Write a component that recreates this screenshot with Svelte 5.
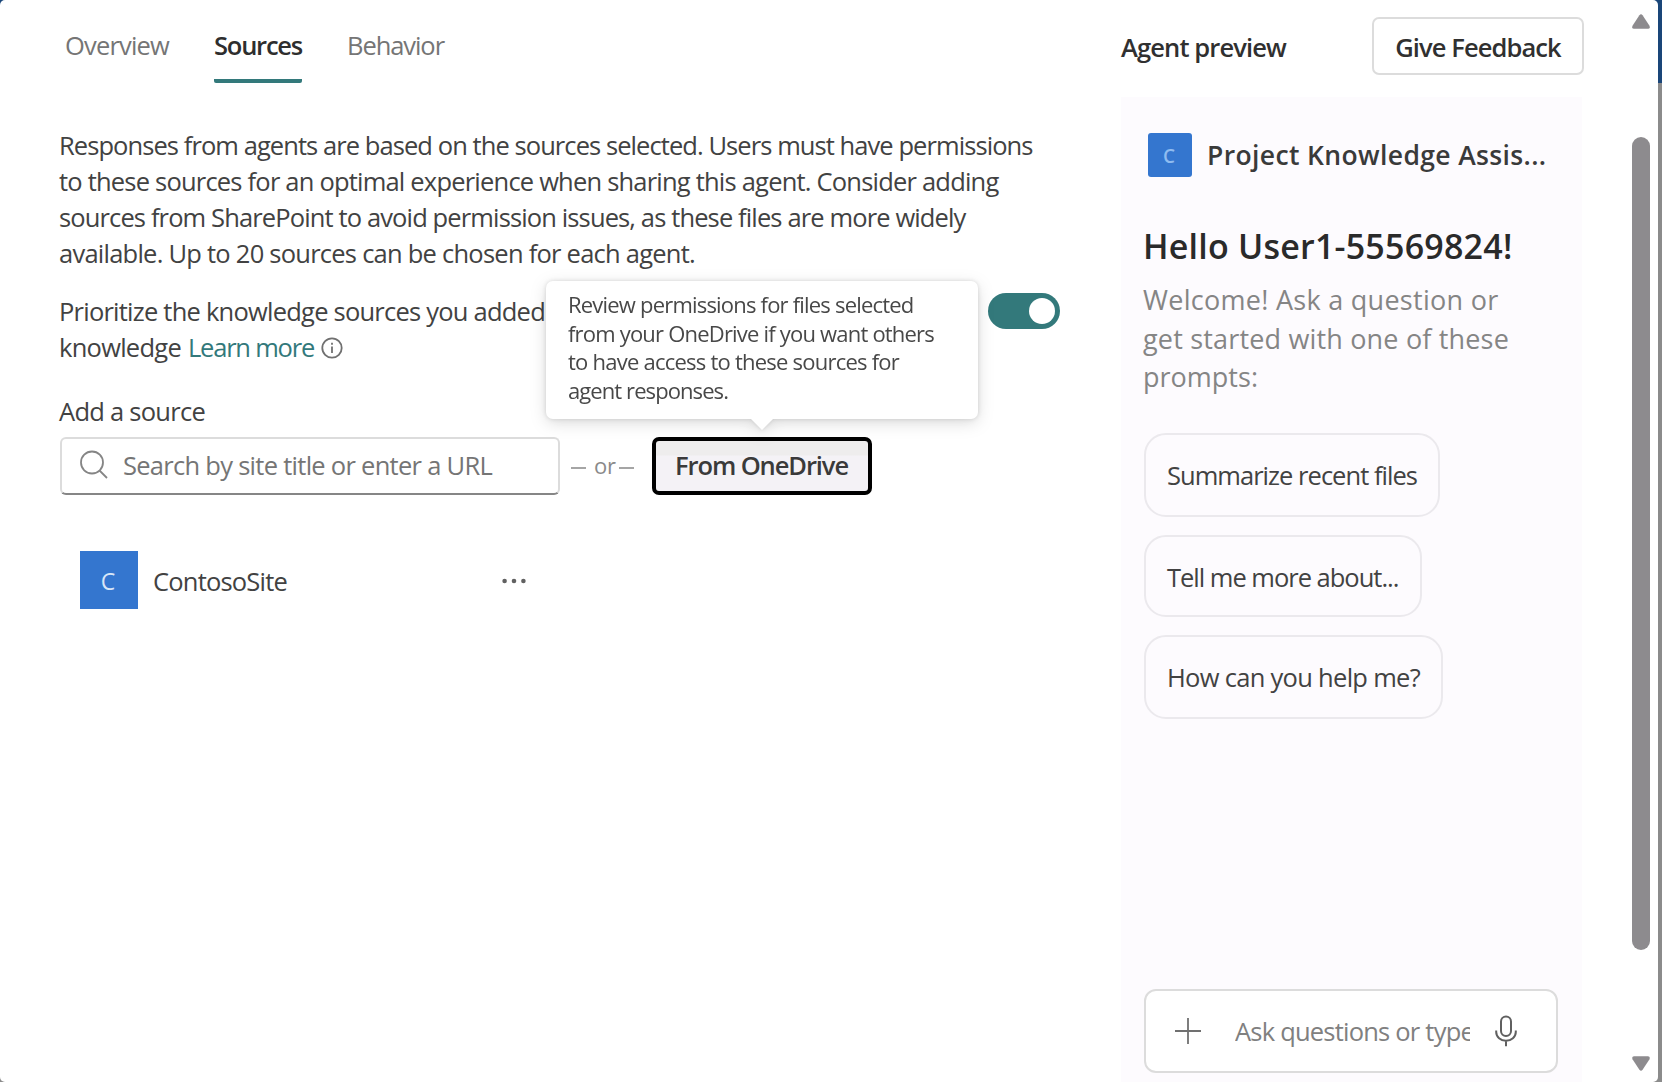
<script>
  // Tracks a line of text so that it spans the given width.
  function fit(node, width) {
    const natural = node.getBoundingClientRect().width;
    node.style.letterSpacing = `${(width - natural) / node.textContent.length}px`;
  }

  const tabs = [
    ['Overview', 104],
    ['Sources', 88],
    ['Behavior', 97]
  ];
  const intro = [
    ['Responses from agents are based on the sources selected. Users must have permissions', 973.5],
    ['to these sources for an optimal experience when sharing this agent. Consider adding', 939.5],
    ['sources from SharePoint to avoid permission issues, as these files are more widely', 906.5],
    ['available. Up to 20 sources can be chosen for each agent.', 636]
  ];
  const tip = [
    ['Review permissions for files selected', 345.5],
    ['from your OneDrive if you want others', 366],
    ['to have access to these sources for', 331],
    ['agent responses.', 160]
  ];
  const welcome = [
    ['Welcome! Ask a question or', 355.5],
    ['get started with one of these', 366],
    ['prompts:', 115]
  ];
  const prompts = [
    ['Summarize recent files', 250],
    ['Tell me more about...', 231.5],
    ['How can you help me?', 253]
  ];
</script>

<div class="dialog">
  <main class="editor">
    <nav class="tabs">
      {#each tabs as [text, width]}
        <div class="tab" class:active={text === 'Sources'}><span class="line" use:fit={width}>{text}</span></div>
      {/each}
    </nav>

    <p class="intro">
      {#each intro as [text, width]}<span class="line" use:fit={width}>{text}</span>{/each}
    </p>

    <div class="priority">
      <p>
        <span class="line" use:fit={486}>Prioritize the knowledge sources you added</span>
        <span class="row">
          <span class="line" use:fit={122}>knowledge</span>
          <span class="line link" use:fit={126}>Learn more</span>
          <svg class="info" viewBox="0 0 22 22"><circle cx="11" cy="11" r="9.7" /><path d="M11 9.5v6.5M11 5.8v2" /></svg>
        </span>
      </p>
      <div class="toggle"><i></i></div>
    </div>

    <div class="label"><span class="line" use:fit={146}>Add a source</span></div>
    <div class="adder">
      <div class="search">
        <svg viewBox="0 0 30 30"><circle cx="13" cy="12.5" r="11" /><path d="M20.5 20.5l7.5 7.5" /></svg>
        <span class="line" use:fit={369}>Search by site title or enter a URL</span>
      </div>
      <div class="or"><i></i><span class="line" use:fit={22}>or</span><i></i></div>
      <div class="onedrive">
        <span class="line" use:fit={173}>From OneDrive</span>
        <div class="tip">
          {#each tip as [text, width]}<span class="line" use:fit={width}>{text}</span>{/each}
        </div>
      </div>
    </div>

    <div class="source">
      <div class="tile"><span>C</span></div>
      <span class="line name" use:fit={134}>ContosoSite</span>
      <svg class="dots" viewBox="0 0 24 8"><circle cx="2.6" cy="4" r="2.3" /><circle cx="12" cy="4" r="2.3" /><circle cx="21.4" cy="4" r="2.3" /></svg>
    </div>
  </main>

  <aside class="preview">
    <header>
      <span class="line" use:fit={165}>Agent preview</span>
      <div class="feedback"><span class="line" use:fit={165.5}>Give Feedback</span></div>
    </header>
    <section class="chat">
      <div class="agent">
        <div class="tile small"><span>C</span></div>
        <span class="line" use:fit={339.5}>Project Knowledge Assis...</span>
      </div>
      <h1><span class="line" use:fit={369.5}>Hello User1-55569824!</span></h1>
      <p class="welcome">
        {#each welcome as [text, width]}<span class="line" use:fit={width}>{text}</span>{/each}
      </p>
      <div class="prompts">
        {#each prompts as [text, width]}
          <div class="prompt"><span class="line" use:fit={width}>{text}</span></div>
        {/each}
      </div>
      <div class="ask">
        <svg class="plus" viewBox="0 0 28 28"><path d="M14 1v26M1 14h26" /></svg>
        <div class="clip"><span class="line" use:fit={239}>Ask questions or type</span></div>
        <svg class="mic" viewBox="0 0 22 32"><rect x="6" y="1.5" width="10" height="19.5" rx="5" /><path d="M1.2 15.5v1.5a9.8 8.8 0 0 0 19.6 0v-1.5M11 25.8v5.4" /></svg>
      </div>
    </section>
  </aside>

  <div class="scroll">
    <svg viewBox="0 0 18 15"><path d="M7.4 1.2Q9 -.7 10.6 1.2L17.5 11.8Q18.5 14.6 16 14.8H2Q-.5 14.6 .5 11.8Z" /></svg>
    <div class="thumb"></div>
    <svg viewBox="0 0 18 15"><path d="M7.4 13.8Q9 15.7 10.6 13.8L17.5 3.2Q18.5 .4 16 .2H2Q-.5 .4 .5 3.2Z" /></svg>
  </div>
</div>

<style>
  :global(body) { background: linear-gradient(#1a4679 83px, #8b8b8b 83px); }
  * { box-sizing: border-box; }
  p, h1 { margin: 0; }
  .dialog {
    width: 1658px; height: 1082px; overflow: hidden; display: flex;
    background: #fff; border-radius: 5px; color: #424242;
    font: 25.5px/36px 'Open Sans', 'Noto Sans', sans-serif;
  }
  .line { display: block; width: max-content; white-space: nowrap; }
  svg { display: block; flex: none; fill: none; stroke: #707070; stroke-width: 1.8; }

  .editor { width: 1121px; padding: 27px 61px 0 59px; }
  .tabs { display: flex; gap: 45px; padding-left: 6px; height: 56px; color: #757575; }
  .tab { height: 56px; }
  .tab.active { color: #2e2e2e; font-weight: 600; border-bottom: 4px solid #33797b; border-radius: 2px; }
  .intro { margin-top: 44px; }
  .priority { display: flex; justify-content: space-between; margin-top: 22px; }
  .row { display: flex; align-items: center; gap: 7px; }
  .link { color: #33797b; }
  .info { width: 22px; height: 22px; margin-top: 2px; }
  .toggle { width: 72px; height: 36px; border-radius: 18px; background: #33797b; padding: 5px; display: flex; justify-content: flex-end; }
  .toggle i { width: 26px; height: 26px; border-radius: 50%; background: #fff; }
  .label { margin-top: 28px; }
  .adder { display: flex; margin-top: 8px; height: 58px; padding-left: 1px; }
  .search { width: 500px; border: 2px solid #dcdcdc; border-bottom-color: #868686; border-radius: 6px; display: flex; align-items: center; padding: 0 0 2px 17px; gap: 14px; color: #757575; }
  .search svg { width: 30px; height: 30px; stroke: #858585; }
  .or { width: 92px; display: flex; align-items: center; padding: 0 0 2px 11px; gap: 3px; font-size: 22px; color: #8a8a8a; }
  .or i { width: 15px; height: 2px; margin-top: 5px; background: #a5a5a5; }
  .or i:first-child { margin-right: 5px; }
  .onedrive { position: relative; width: 220px; border: 4px solid #000; border-radius: 7px; background: linear-gradient(#eeeded 14px, #f4f2f6 15px); display: grid; place-items: center; padding: 0 1px 2px 0; font-weight: 600; color: #3a3a3a; }
  .tip { position: absolute; left: -110px; top: -160px; width: 432px; height: 138px; border-radius: 7px; background: #fff; padding: 9px 22px; font: 22px/28.6px 'Open Sans', 'Noto Sans', sans-serif; color: #484848; filter: drop-shadow(0 4px 8px #0002) drop-shadow(0 0 2px #0002); }
  .tip::after { content: ''; position: absolute; left: 205px; top: 138px; border: 11px solid transparent; border-top-color: #fff; border-bottom: 0; }
  .source { display: flex; align-items: center; margin: 56px 0 0 21px; height: 58px; width: 446px; }
  .name { padding-top: 2px; }
  .tile { width: 58px; height: 58px; background: #3476cf; color: #d8e6f8; display: grid; place-items: center; font-size: 23px; margin-right: 15px; flex: none; }
  .tile span { margin: 1px 2px 0 0; }
  .tile.small { width: 44px; height: 44px; border-radius: 3px; font-size: 19px; color: #8fbcf0; }
  .dots { width: 24px; height: 8px; margin: 2px 0 0 auto; fill: #616161; stroke: none; }

  .preview { width: 463px; }
  .preview header { display: flex; justify-content: space-between; align-items: center; padding-top: 17px; height: 75px; color: #303030; font-weight: 600; }
  .preview header .line { padding-top: 1px; }
  .feedback { width: 212px; height: 58px; border: 2px solid #dcdcdc; border-radius: 7px; display: grid; place-items: center; }
  .chat { width: 461px; height: 985px; margin-top: 22px; background: #fdfbfe; padding: 36px 23px 0; }
  .agent { display: flex; align-items: center; padding-left: 4px; font-size: 26.5px; font-weight: 600; color: #3a3a3a; }
  h1 { margin: 45px 0 0 -1px; font-size: 34px; line-height: 48px; font-weight: 600; color: #2a2a2a; }
  .welcome { margin: 9px 0 0 -1px; font-size: 27px; line-height: 39px; color: #858585; }
  .welcome .line:nth-child(-n + 2) { position: relative; top: 1px; }
  .prompts { display: flex; flex-direction: column; align-items: flex-start; gap: 18px; margin-top: 37px; }
  .prompt { height: 84px; padding: 22px 21px; border: 2px solid #ebe9ed; border-radius: 22px; }
  .prompt:nth-child(2) { height: 82px; }
  .ask { display: flex; align-items: center; height: 84px; width: 414px; margin-top: 270px; border: 2px solid #dcdcdc; border-radius: 12px; background: #fff; color: #808080; padding-left: 28px; }
  .plus { width: 28px; height: 28px; }
  .clip { width: 235px; margin-left: 33px; overflow: hidden; }
  .mic { width: 22px; height: 32px; margin-left: 25px; stroke: #606060; stroke-width: 2; }

  .scroll { width: 18px; margin-left: 48px; padding: 14px 0 11px; display: flex; flex-direction: column; }
  .scroll svg { width: 18px; height: 15px; fill: #8d8b8e; stroke: none; }
  .thumb { height: 814px; margin: 108px 0 106px; border-radius: 9px; background: #8d8b8e; }
</style>
